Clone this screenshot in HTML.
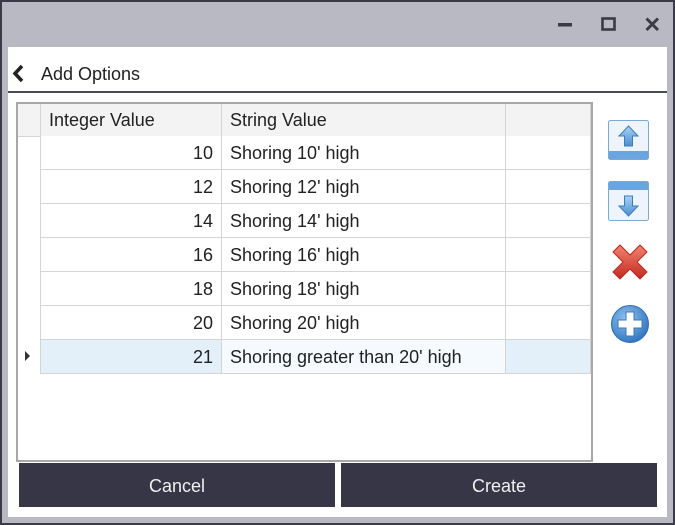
<!DOCTYPE html>
<html><head><style>
*{margin:0;padding:0;box-sizing:border-box}
body{width:675px;height:525px;background:#b9b9c3;position:relative;overflow:hidden;font-family:"Liberation Sans",sans-serif;}
.frame{position:absolute;left:0;top:0;width:675px;height:525px;border:2px solid #3a3a48}
.white{position:absolute;left:8px;top:47px;width:659px;height:470px;background:#fff}
.title{position:absolute;left:41px;top:64px;font-size:18px;color:#222}
.sep{position:absolute;left:8px;top:91px;width:659px;height:2px;background:#4a4a58}
.grid{position:absolute;left:16px;top:102px;width:577px;height:360px;border:2px solid #a8a8a8;background:#fff}
.c{position:absolute;border-right:1px solid #d4d4d4;border-bottom:1px solid #d4d4d4;font-size:18px;color:#222;line-height:34px;padding:0 8px;white-space:nowrap}
.btn{position:absolute;top:463px;height:44px;background:#363646;color:#f0f0f0;font-size:18px;text-align:center;line-height:47px}
</style></head><body>
<div class="frame"></div>
<svg style="position:absolute;left:555px;top:14px" width="110" height="22">
<rect x="3" y="9" width="14" height="3.5" fill="#3a3a48"/>
<rect x="47.5" y="4.5" width="12" height="11" fill="none" stroke="#3a3a48" stroke-width="2.6"/>
<path d="M91.5 4.5 L103 16 M103 4.5 L91.5 16" stroke="#3a3a48" stroke-width="3"/>
</svg>
<div class="white"></div>
<svg style="position:absolute;left:10px;top:64px" width="16" height="20"><path d="M12 2 L5 9.5 L12 17" fill="none" stroke="#222" stroke-width="3.5"/></svg>
<div class="title">Add Options</div>
<div class="sep"></div>
<div class="grid">
<div class="c" style="left:0;top:0;width:23px;height:33px;background:#f3f3f3"></div>
<div class="c" style="left:23px;top:0;width:181px;height:33px;background:#f3f3f3;line-height:33px">Integer Value</div>
<div class="c" style="left:204px;top:0;width:284px;height:33px;background:#f3f3f3;line-height:33px">String Value</div>
<div class="c" style="left:488px;top:0;width:85px;height:33px;background:#f3f3f3"></div>
</div>
<div id="rows"></div>
<script>
var d=[[10,"Shoring 10' high"],[12,"Shoring 12' high"],[14,"Shoring 14' high"],[16,"Shoring 16' high"],[18,"Shoring 18' high"],[20,"Shoring 20' high"],[21,"Shoring greater than 20' high"]];
var h="";
d.forEach(function(r,i){var t=136+i*34;var s=i==6;
h+='<div class="c" style="left:40px;top:'+t+'px;width:182px;height:34px;text-align:right;border-left:1px solid #d4d4d4;background:'+(s?'#e3f0fa':'#fff')+'">'+r[0]+'</div>';
h+='<div class="c" style="left:222px;top:'+t+'px;width:284px;height:34px;background:'+(s?'#f5fafe':'#fff')+'">'+r[1]+'</div>';
h+='<div class="c" style="left:506px;top:'+t+'px;width:85px;height:34px;background:'+(s?'#e3f0fa':'#fff')+'"></div>';});
document.getElementById('rows').innerHTML=h;
</script>
<svg style="position:absolute;left:24px;top:350px" width="8" height="12"><path d="M1 1 L6 6 L1 11Z" fill="#333"/></svg>
<svg style="position:absolute;left:605px;top:115px" width="50" height="235">
<defs><linearGradient id="b" x1="0" y1="0" x2="0" y2="1"><stop offset="0" stop-color="#a9d2f3"/><stop offset="1" stop-color="#4a8fd0"/></linearGradient>
<radialGradient id="r" cx=".4" cy=".35" r=".7"><stop offset="0" stop-color="#8fc4ef"/><stop offset="1" stop-color="#2f72bd"/></radialGradient>
<linearGradient id="x" x1="0" y1="0" x2="0" y2="1"><stop offset="0" stop-color="#f28270"/><stop offset="1" stop-color="#c42a20"/></linearGradient></defs>
<rect x="3.5" y="5.5" width="40" height="39" rx="2" fill="#eef4fb" stroke="#7aa8d8"/>
<rect x="4" y="36" width="39" height="8" fill="#6aa5e0"/>
<path d="M23.5 11 L33 21 L27.5 21 L27.5 31 L19.5 31 L19.5 21 L14 21Z" fill="url(#b)" stroke="#3a7cc0"/>
<rect x="3.5" y="66.5" width="40" height="39" rx="2" fill="#eef4fb" stroke="#7aa8d8"/>
<rect x="4" y="67" width="39" height="8" fill="#6aa5e0"/>
<path d="M23.5 101 L33 91 L27.5 91 L27.5 81 L19.5 81 L19.5 91 L14 91Z" fill="url(#b)" stroke="#3a7cc0"/>
<path d="M8 137 L15 130 L25 140 L35 130 L42 137 L32 147 L42 157 L35 164 L25 154 L15 164 L8 157 L18 147Z" fill="url(#x)" stroke="#b52a20" stroke-linejoin="round"/>
<circle cx="25" cy="209" r="18.5" fill="url(#r)" stroke="#2f6fb5"/>
<path d="M21 197 h8 v8 h8 v8 h-8 v8 h-8 v-8 h-8 v-8 h8Z" fill="#fff" stroke="#3a78bd"/>
</svg>
<div class="btn" style="left:19px;width:316px">Cancel</div>
<div class="btn" style="left:341px;width:316px">Create</div>
</body></html>
